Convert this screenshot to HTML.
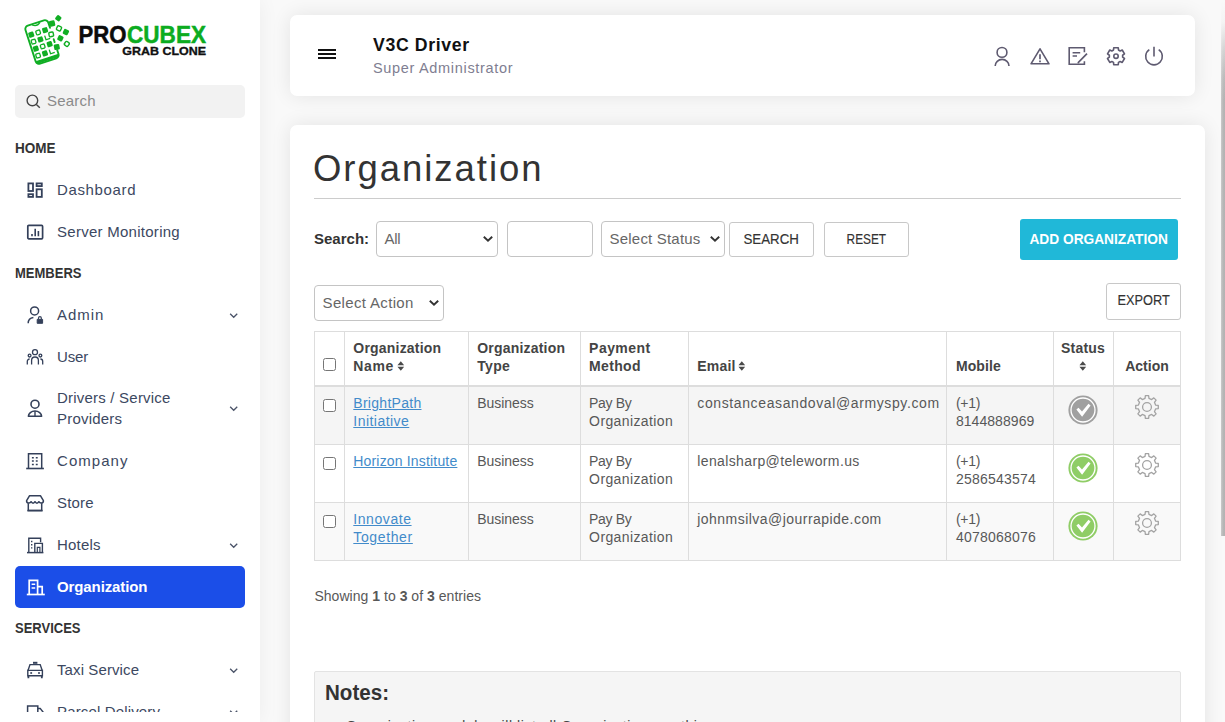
<!DOCTYPE html>
<html lang="en">
<head>
<meta charset="utf-8">
<title>Organization</title>
<style>
*{box-sizing:border-box;margin:0;padding:0}
html,body{width:1225px;height:722px;overflow:hidden}
body{font-family:"Liberation Sans",sans-serif;background:#f9f9f9;color:#333;position:relative;font-size:14px}
.abs{position:absolute}
/* ---------- sidebar ---------- */
#side{position:absolute;left:0;top:0;width:260px;height:722px;background:#fff;box-shadow:0 0 20px rgba(0,0,0,.055);overflow:hidden}
#sbox{position:absolute;left:15px;top:85px;width:230px;height:33px;background:#f2f2f2;border-radius:5px}
#sbox>span{position:absolute;left:32px;top:7.300px;font-size:15px;color:#8a8a8a;letter-spacing:.45px}
.sec{position:absolute;left:15px;font-size:14px;font-weight:bold;color:#333;letter-spacing:-.2px;line-height:16px}
.mi{position:absolute;left:15px;width:230px;height:42px;border-radius:5px;color:#3c4861;font-size:15px}
.mi .ic{position:absolute;left:11px;top:12px;width:18px;height:18px}
.mi .tx{position:absolute;left:42px;top:12px;line-height:18px;white-space:nowrap;letter-spacing:.45px}
.mi .ch{position:absolute;left:214.300px;top:19px;width:9.400px;height:5.600px}
.mi.act{background:#1b4ee8;color:#fff}
.mi.act .tx{font-weight:bold;letter-spacing:-.1px}
svg{display:block;overflow:visible}
/* ---------- header ---------- */
#hdr{position:absolute;left:290px;top:15px;width:905px;height:81px;background:#fff;border-radius:7px;box-shadow:0 0 20px rgba(0,0,0,.09)}
#burger{position:absolute;left:28px;top:34px;width:18.200px;height:10px}
#burger i{display:block;height:1.700px;background:#111;margin-bottom:2.400px}
#hdr h3{position:absolute;left:83px;top:19px;font-size:17.700px;line-height:22px;font-weight:bold;color:#111;letter-spacing:.2px;white-space:nowrap}
#hdr p{position:absolute;left:83px;top:43.800px;font-size:14.500px;line-height:18px;color:#807e91;letter-spacing:.25px;white-space:nowrap}
.hic{position:absolute;top:30px;width:22px;height:22px}
/* ---------- content ---------- */
#card{position:absolute;left:290px;top:125px;width:915px;height:640px;background:#fff;border-radius:7px;box-shadow:0 0 20px rgba(0,0,0,.09)}
#card h1{position:absolute;left:23px;top:21.500px;font-size:36.500px;line-height:44px;font-weight:normal;color:#333;letter-spacing:.9px;white-space:nowrap}
#hr{position:absolute;left:24px;top:73px;width:867px;height:1px;background:#ccc}
.ctl{position:absolute;border:1px solid #c4c4c4;border-radius:4px;background:#fff;color:#666;font-size:15px;white-space:nowrap}
.ctl>span{position:absolute;left:7.300px;top:8px;line-height:17px}
.ctl .dd{position:absolute;right:5px;top:13px;width:9px;height:6px}
.btn{position:absolute;border:1px solid #c8c8c8;border-radius:3px;background:#fff;color:#333;font-size:14px;text-align:center;white-space:nowrap;letter-spacing:.4px}

.lbl{font-size:15px;color:#333;letter-spacing:.1px;line-height:18px}
.btn{-webkit-text-stroke:.15px #333}
.btn.add{-webkit-text-stroke:0;background:#20b8d8;border:0;color:#fff;font-weight:bold;font-size:14px;border-radius:3px}
#tbl{position:absolute;left:23.800px;top:206px;width:867.200px;height:229.800px;border:1px solid #ddd;overflow:hidden}
#tbl .row{position:absolute;left:0;width:867px}
#tbl .vl{position:absolute;top:0;width:1px;height:230px;background:#ddd}
#tbl .hl{position:absolute;left:0;width:867px;height:1px;background:#ddd}
.cb{position:absolute;width:13px;height:13px;border:1px solid #767676;border-radius:2.500px;background:#fff}
.th{position:absolute;font-size:14px;line-height:18px;font-weight:bold;color:#444;white-space:nowrap;letter-spacing:-.15px}
.td{position:absolute;font-size:14px;line-height:18px;color:#585858;white-space:nowrap;letter-spacing:.35px}
.td.lnk{color:#428bca}
.sort{display:inline-block;margin-left:2.500px;vertical-align:0}
#notes{position:absolute;left:24px;top:546px;width:867px;height:120px;background:#f5f5f5;border:1px solid #e3e3e3;border-radius:2px}
#notes h4{position:absolute;left:10px;top:8px;font-size:21.700px;line-height:26px;color:#333;letter-spacing:-.2px}
#notes p{position:absolute;left:31px;top:44.500px;font-size:14px;line-height:18px;color:#444;letter-spacing:.35px;white-space:nowrap}
#notes .bul{position:absolute;left:15px;top:52px;width:5px;height:5px;border-radius:50%;background:#444}
#sb{position:absolute;left:1221px;top:0;width:4px;height:535.500px;background:linear-gradient(to bottom,#f9f9f9 0,rgba(249,249,249,.92) 22px,rgba(249,249,249,.45) 50px,rgba(249,249,249,.1) 78px,rgba(249,249,249,0) 100px),linear-gradient(to right,#cacaca,#b6b6b6 55%,#b3b3b3)}
</style>
</head>
<body>
<div id="side">
  <svg id="logo" class="abs" style="left:20px;top:10px" width="195" height="62" viewBox="0 0 195 62">
    <g transform="translate(22,32) rotate(-18)">
      <path d="M12 -11V-16.500a3.500 3.500 0 0 0 -3.500 -3.500H-8.500a3.500 3.500 0 0 0 -3.500 3.500V16.500a3.500 3.500 0 0 0 3.500 3.500H8.500a3.500 3.500 0 0 0 3.500 -3.500V12.500M12 1V4" fill="none" stroke="#10ae24" stroke-width="1.900" stroke-linecap="round"/>
      <path d="M-10.500 17.800H10.500" stroke="#10ae24" stroke-width="3.200" stroke-linecap="round"/>
      <path d="M-4.200 -19.300q4.200 3.600 8.400 0" fill="none" stroke="#10ae24" stroke-width="1.200"/>
      <rect x="-10.60" y="-13.00" width="5.4" height="5.4" rx="1.2" fill="#10ae24"/><rect x="-2.80" y="-12.40" width="4.2" height="4.2" rx="1" fill="none" stroke="#10ae24" stroke-width="1.3"/><rect x="3.90" y="-13.00" width="5.4" height="5.4" rx="1.2" fill="#10ae24"/><rect x="-10.00" y="-5.05" width="4.2" height="4.2" rx="1" fill="none" stroke="#10ae24" stroke-width="1.3"/><rect x="-3.40" y="-5.65" width="5.4" height="5.4" rx="1.2" fill="#10ae24"/><path d="M4.50 -5.25V-0.85H8.90" fill="none" stroke="#10ae24" stroke-width="1.3"/><rect x="-10.60" y="1.70" width="5.4" height="5.4" rx="1.2" fill="#10ae24"/><rect x="-2.80" y="2.30" width="4.2" height="4.2" rx="1" fill="none" stroke="#10ae24" stroke-width="1.3"/><rect x="3.90" y="1.70" width="5.4" height="5.4" rx="1.2" fill="#10ae24"/><rect x="-10.00" y="9.65" width="4.2" height="4.2" rx="1" fill="none" stroke="#10ae24" stroke-width="1.3"/><rect x="-3.40" y="9.05" width="5.4" height="5.4" rx="1.2" fill="#10ae24"/><path d="M4.50 9.45V13.85H8.90" fill="none" stroke="#10ae24" stroke-width="1.3"/>
    </g>
    <rect x="-2.9" y="-2.9" width="5.8" height="5.8" rx="1.2" fill="#10ae24" transform="translate(32.1,13.5) rotate(-12)"/><rect x="-2.6" y="-2.6" width="5.2" height="5.2" rx="1.2" fill="#10ae24" transform="translate(38.3,8.2) rotate(38)"/><rect x="-2.2" y="-2.2" width="4.4" height="4.4" rx="1" fill="#fff" stroke="#10ae24" stroke-width="1.4" transform="translate(39,18.4) rotate(25)"/><rect x="-2.7" y="-2.7" width="5.4" height="5.4" rx="1.2" fill="#10ae24" transform="translate(45.9,22.1) rotate(25)"/><rect x="-2.2" y="-2.2" width="4.4" height="4.4" rx="1" fill="#fff" stroke="#10ae24" stroke-width="1.4" transform="translate(31.2,24.4) rotate(-12)"/><rect x="-2.7" y="-2.7" width="5.4" height="5.4" rx="1.2" fill="#10ae24" transform="translate(40.4,28.3) rotate(25)"/><rect x="-2.1" y="-2.1" width="4.2" height="4.2" rx="1" fill="#fff" stroke="#10ae24" stroke-width="1.4" transform="translate(46.8,33.9) rotate(38)"/><rect x="-2.8" y="-2.8" width="5.6" height="5.6" rx="1.2" fill="#10ae24" transform="translate(36.8,37) rotate(-12)"/>
    <text x="58.600" y="33" font-family="Liberation Sans, sans-serif" font-weight="bold" font-size="24.500" textLength="48" lengthAdjust="spacingAndGlyphs" fill="#0b0b0b" stroke="#0b0b0b" stroke-width=".5">PRO</text>
    <text x="107" y="33" font-family="Liberation Sans, sans-serif" font-weight="bold" font-size="24.500" textLength="79" lengthAdjust="spacingAndGlyphs" fill="#0cac1f" stroke="#0cac1f" stroke-width=".5">CUBEX</text>
    <text x="102.300" y="45.200" font-family="Liberation Sans, sans-serif" font-weight="bold" font-size="11.600" textLength="83.700" lengthAdjust="spacingAndGlyphs" fill="#111" stroke="#111" stroke-width=".35">GRAB CLONE</text>
  </svg>
  <div id="sbox"><svg class="abs" style="left:11px;top:9px" width="15" height="15" viewBox="0 0 15 15" fill="none" stroke="#444" stroke-width="1.400"><circle cx="6.400" cy="6.400" r="5.300"/><path d="M10.400 10.400l3.400 3.400"/></svg><span><span style="letter-spacing:0.194px">Search</span></span></div>
  <div class="sec" style="top:140px"><span style="display:inline-block;letter-spacing:0;transform:scaleX(0.9667);transform-origin:left center">HOME</span></div>
  <div class="mi" style="top:169px;height:42px"><svg class="ic" viewBox="0 0 18 18" fill="none" stroke="#34405a" stroke-width="1.800"><rect x="2.400" y="2.400" width="4.600" height="7.600"/><rect x="10.600" y="2.400" width="5.200" height="2.700"/><rect x="2.400" y="13.200" width="4.600" height="2.700"/><rect x="10.600" y="8.300" width="5.200" height="7.600"/></svg><span class="tx"><span style="letter-spacing:0.639px">Dashboard</span></span></div>
  <div class="mi" style="top:211px;height:42px"><svg class="ic" viewBox="0 0 18 18" fill="none" stroke="#34405a" stroke-width="1.700"><rect x="1.800" y="2.400" width="14.800" height="13.400" rx="1"/><path d="M6 13.200v-2.200M9.200 13.200V5.800M12.400 13.200V8" stroke-width="1.600"/></svg><span class="tx"><span style="letter-spacing:0.269px">Server Monitoring</span></span></div>
  <div class="sec" style="top:265px"><span style="display:inline-block;letter-spacing:0;transform:scaleX(0.9293);transform-origin:left center">MEMBERS</span></div>
  <div class="mi" style="top:294px;height:42px"><svg class="ic" viewBox="0 0 18 18" fill="none" stroke="#34405a" stroke-width="1.500"><circle cx="8.600" cy="4.900" r="4"/><path d="M2.200 17.300c0-3.400 2.300-5.600 5.200-5.900"/><path d="M11.200 13.400h5.400v3.900h-5.400z" fill="#34405a" stroke-width="1"/><path d="M12.500 13.300v-1.200a1.400 1.400 0 0 1 2.800 0v1.200" stroke-width="1.200"/></svg><span class="tx"><span style="letter-spacing:0.942px">Admin</span></span><svg class="ch" viewBox="0 0 10 6"><path d="M1.2 0.9 L5 4.6 L8.8 0.9" fill="none" stroke="#4a5368" stroke-width="1.4"/></svg></div>
  <div class="mi" style="top:336px;height:42px"><svg class="ic" viewBox="0 0 18 18" fill="none" stroke="#34405a" stroke-width="1.3"><circle cx="9" cy="4.2" r="2.5"/><circle cx="3.6" cy="7.6" r="1.4"/><circle cx="14.4" cy="7.6" r="1.4"/><path d="M5.6 16.6v-4.2a3.4 3.4 0 0 1 6.8 0v4.2"/><path d="M1.3 16.6v-3.3a2.3 2.3 0 0 1 2.3-2.3"/><path d="M16.7 16.6v-3.3a2.3 2.3 0 0 0-2.3-2.3"/></svg><span class="tx"><span style="letter-spacing:-0.157px">User</span></span></div>
  <div class="mi" style="top:377px;height:63px"><svg class="ic" style="top:22px" viewBox="0 0 18 18" fill="none" stroke="#34405a" stroke-width="1.600"><circle cx="9" cy="5.200" r="4"/><path d="M2.400 17.200a6.600 5.200 0 0 1 13.200 0z" stroke-linejoin="round"/><path d="M9 12.200v5" stroke-width="1.400"/></svg><span class="tx" style="top:11.200px;line-height:20.800px;white-space:normal"><span style="letter-spacing:0.211px">Drivers / Service</span><br><span style="letter-spacing:0.205px">Providers</span></span><svg class="ch" style="top:29px" viewBox="0 0 10 6"><path d="M1.2 0.9 L5 4.6 L8.8 0.9" fill="none" stroke="#4a5368" stroke-width="1.4"/></svg></div>
  <div class="mi" style="top:440px;height:42px"><svg class="ic" viewBox="0 0 18 18" fill="none" stroke="#34405a" stroke-width="1.500"><path d="M2.500 16.400V1.700h13.200v14.700"/><path d="M0.200 16.500h17.700" stroke-width="1.600"/><path d="M5.900 5.800h1.900M9.800 5.800h1.900M5.900 9.100h1.900M9.800 9.100h1.900M5.900 12.400h1.900M9.800 12.400h1.900" stroke-width="1.500"/></svg><span class="tx"><span style="letter-spacing:1.049px">Company</span></span></div>
  <div class="mi" style="top:482px;height:42px"><svg class="ic" viewBox="0 0 18 18" fill="none" stroke="#34405a" stroke-width="1.500"><path d="M3.600 1.700h10.800l3 5c.2 2.600-3.300 3.200-4.500 1-1 1.900-2.900 1.900-3.900 0-1 1.900-2.900 1.900-3.900 0-1.200 2.200-4.700 1.600-4.500-1z" stroke-linejoin="round"/><path d="M2.300 9.300v7.200h13.400V9.300"/><path d="M1.400 16.600h15.200" stroke-width="1.600"/></svg><span class="tx"><span style="letter-spacing:0.160px">Store</span></span></div>
  <div class="mi" style="top:524px;height:42px"><svg class="ic" viewBox="0 0 18 18" fill="none" stroke="#34405a" stroke-width="1.4"><path d="M2.800 16.400V2.300h11.800v4"/><path d="M8.800 16.400V7.400h7.600v9"/><path d="M11.300 16.400v-5h2.600v5" stroke-width="1.200"/><path d="M1 16.600h16.400" stroke-width="1.500"/><path d="M5 5.500h1.400M5 8.700h1.400M5 11.900h1.400" stroke-width="1.400"/></svg><span class="tx"><span style="letter-spacing:0.194px">Hotels</span></span><svg class="ch" viewBox="0 0 10 6"><path d="M1.2 0.9 L5 4.6 L8.8 0.9" fill="none" stroke="#4a5368" stroke-width="1.4"/></svg></div>
  <div class="mi act" style="top:566px;height:42px"><svg class="ic" viewBox="0 0 18 18" fill="none" stroke="#fff" stroke-width="1.700"><path d="M3.200 16.400V2.400h8.400v14"/><path d="M11.600 8.600h4.600v7.800"/><path d="M0.800 16.500h18" stroke-width="1.700"/><path d="M5.600 6.300h3.600M5.600 10h3.600" stroke-width="1.500"/></svg><span class="tx"><span style="letter-spacing:-0.107px">Organization</span></span></div>
  <div class="sec" style="top:620px"><span style="display:inline-block;letter-spacing:0;transform:scaleX(0.9285);transform-origin:left center">SERVICES</span></div>
  <div class="mi" style="top:649px;height:42px"><svg class="ic" viewBox="0 0 18 18" fill="none" stroke="#34405a" stroke-width="1.400"><path d="M7 1.800h4.400" stroke-width="2"/><path d="M2 9.400l2-5.800h10.200l2 5.800"/><path d="M1.800 9.400h14.600v5.400H1.800z"/><path d="M2.400 14.800v2.400M15.800 14.800v2.400" stroke-width="1.800"/><path d="M4.200 12h2M5.200 11v2M12 12h2M13 11v2" stroke-width="1"/></svg><span class="tx"><span style="letter-spacing:0.104px">Taxi Service</span></span><svg class="ch" viewBox="0 0 10 6"><path d="M1.2 0.9 L5 4.6 L8.8 0.9" fill="none" stroke="#4a5368" stroke-width="1.4"/></svg></div>
  <div class="mi" style="top:691px;height:42px"><svg class="ic" viewBox="0 0 18 18" fill="none" stroke="#34405a" stroke-width="1.500"><path d="M1.600 14V3h10.200v11"/><path d="M11.800 5.400h2.400l3 3.800V14"/></svg><span class="tx"><span style="letter-spacing:0.152px">Parcel Delivery</span></span><svg class="ch" viewBox="0 0 10 6"><path d="M1.2 0.9 L5 4.6 L8.8 0.9" fill="none" stroke="#4a5368" stroke-width="1.4"/></svg></div>
  <div class="abs" style="left:0;top:712px;width:260px;height:10px;background:#fff"></div>
</div>
<div id="hdr">
  <div id="burger"><i></i><i></i><i></i></div>
  <h3><span style="letter-spacing:0.627px">V3C Driver</span></h3>
  <p><span style="letter-spacing:0.681px">Super Administrator</span></p>
  <svg class="abs" style="left:700px;top:29px" width="24" height="24" viewBox="0 0 24 24" fill="none" stroke="#5e5a70" stroke-width="1.600"><circle cx="12" cy="8.400" r="4.900"/><path d="M5.200 22a6.900 6.600 0 0 1 13.800 0"/></svg>
  <svg class="abs" style="left:738px;top:29px" width="24" height="24" viewBox="0 0 24 24" fill="none" stroke="#5e5a70" stroke-width="1.600" stroke-linejoin="round"><path d="M12 4.800L21 19.800H3z"/><path d="M12 10.300v5" stroke-width="1.700"/><path d="M12 16.600v1.600" stroke-width="1.700"/></svg>
  <svg class="abs" style="left:775px;top:29px" width="24" height="24" viewBox="0 0 24 24" fill="none" stroke="#5e5a70" stroke-width="1.600"><path d="M19.400 8.200V3.800H4.200v16.400h15.200v-3"/><path d="M7.600 8.800h7.600M7.600 12h4.400" stroke-width="1.500"/><path d="M22 9.600l-8.600 8.700-.2 1.100" stroke-width="1.700" stroke-linecap="butt"/></svg>
  <svg class="abs" style="left:814px;top:29px" width="24" height="24" viewBox="0 0 24 24" fill="none" stroke="#5e5a70" stroke-width="1.600" stroke-linejoin="round"><path d="M9.72 3.70L14.28 3.70L14.48 5.98L16.15 6.94L18.22 5.98L20.50 9.92L18.63 11.24L18.63 13.16L20.50 14.48L18.22 18.42L16.15 17.46L14.48 18.42L14.28 20.70L9.72 20.70L9.52 18.42L7.85 17.46L5.78 18.42L3.50 14.48L5.37 13.16L5.37 11.24L3.50 9.92L5.78 5.98L7.85 6.94L9.52 5.98Z"/><circle cx="12" cy="12.200" r="2.200"/></svg>
  <svg class="abs" style="left:852px;top:29px" width="24" height="24" viewBox="0 0 24 24" fill="none" stroke="#5e5a70" stroke-width="1.600"><path d="M12 2.800v9.600"/><path d="M7.300 5.700a8.300 8.300 0 1 0 9.400 0"/></svg>
</div>
<div id="card">
  <h1><span style="letter-spacing:1.968px">Organization</span></h1>
  <div id="hr"></div>
  <b class="abs lbl" style="left:24px;top:105px"><span style="letter-spacing:0.011px">Search:</span></b>
  <div class="ctl" style="left:86.300px;top:96px;width:121.400px;height:35.500px"><span><span style="letter-spacing:-0.386px">All</span></span></div><svg class="abs" style="left:192.8px;top:111.4px" width="10" height="6" viewBox="0 0 10 6"><path d="M0.800 0.700L5 4.700L9.200 0.700" fill="none" stroke="#333" stroke-width="1.900"/></svg>
  <div class="ctl" style="left:217.300px;top:96px;width:86px;height:35.500px"></div>
  <div class="ctl" style="left:311.300px;top:96px;width:124.200px;height:35.500px"><span><span style="letter-spacing:0.192px">Select Status</span></span></div><svg class="abs" style="left:420.3px;top:111.4px" width="10" height="6" viewBox="0 0 10 6"><path d="M0.800 0.700L5 4.700L9.200 0.700" fill="none" stroke="#333" stroke-width="1.900"/></svg>
  <div class="btn" style="left:439.300px;top:97px;width:84.400px;height:34.500px;line-height:32.500px"><span style="display:inline-block;letter-spacing:0;transform:scaleX(0.9493);transform-origin:center center">SEARCH</span></div>
  <div class="btn" style="left:534.300px;top:97px;width:84.400px;height:34.500px;line-height:32.500px"><span style="display:inline-block;letter-spacing:0;transform:scaleX(0.8461);transform-origin:center center">RESET</span></div>
  <div class="btn add" style="left:730.200px;top:94px;width:157.800px;height:41px;line-height:40px"><span style="display:inline-block;letter-spacing:0;transform:scaleX(0.9795);transform-origin:center center">ADD ORGANIZATION</span></div>
  <div class="ctl" style="left:24.300px;top:160px;width:129.400px;height:35.500px"><span><span style="letter-spacing:0.340px">Select Action</span></span></div><svg class="abs" style="left:139px;top:175px" width="10" height="6" viewBox="0 0 10 6"><path d="M0.800 0.700L5 4.700L9.200 0.700" fill="none" stroke="#333" stroke-width="1.900"/></svg>
  <div class="btn" style="left:816.400px;top:158px;width:74.300px;height:36.500px;line-height:33.500px"><span style="display:inline-block;letter-spacing:0;transform:scaleX(0.9125);transform-origin:center center">EXPORT</span></div>
  <div id="tbl">
    <div class="row" style="top:0;height:54px;background:#fff"></div>
    <div class="row" style="top:54px;height:59px;background:#f5f5f5"></div>
    <div class="row" style="top:112px;height:59px;background:#fff"></div>
    <div class="row" style="top:170px;height:59px;background:#f9f9f9"></div>
    <div class="vl" style="left:29px"></div>
    <div class="vl" style="left:153px"></div>
    <div class="vl" style="left:265px"></div>
    <div class="vl" style="left:373px"></div>
    <div class="vl" style="left:631px"></div>
    <div class="vl" style="left:738px"></div>
    <div class="vl" style="left:798px"></div>
    <div class="hl" style="top:52.500px;height:2px;background:#ddd"></div>
    <div class="hl" style="top:112px"></div>
    <div class="hl" style="top:170px"></div>
  </div>
<i class="cb" style="left:33.3px;top:233px"></i>
  <div class="th" style="left:63.300px;top:214.400px"><span style="letter-spacing:0.203px">Organization</span><br><span style="letter-spacing:0.653px">Name</span><svg class="sort" width="7.600" height="10" viewBox="0 0 8 11"><path d="M4 0.200L7.700 4.600H0.300z M4 10.800L0.300 6.400H7.700z" fill="#4a4a4a"/></svg></div>
  <div class="th" style="left:187.200px;top:214.400px"><span style="letter-spacing:0.203px">Organization</span><br><span style="letter-spacing:0.320px">Type</span></div>
  <div class="th" style="left:299.100px;top:214.400px"><span style="letter-spacing:0.457px">Payment</span><br><span style="letter-spacing:0.327px">Method</span></div>
  <div class="th" style="left:407.300px;top:232.400px"><span style="letter-spacing:0.210px">Email</span><svg class="sort" width="7.600" height="10" viewBox="0 0 8 11"><path d="M4 0.200L7.700 4.600H0.300z M4 10.800L0.300 6.400H7.700z" fill="#4a4a4a"/></svg></div>
  <div class="th" style="left:665.900px;top:232.400px"><span style="letter-spacing:0.131px">Mobile</span></div>
  <div class="th" style="left:763px;top:214.400px;width:60px;text-align:center"><span style="letter-spacing:0.221px">Status</span><br><svg class="sort" style="margin-left:0" width="7.600" height="10" viewBox="0 0 8 11"><path d="M4 0.200L7.700 4.600H0.300z M4 10.800L0.300 6.400H7.700z" fill="#4a4a4a"/></svg></div>
  <div class="th" style="left:823px;top:232.400px;width:68px;text-align:center"><span style="letter-spacing:-0.013px">Action</span></div>
  <i class="cb" style="left:33.3px;top:274px"></i>
  <div class="td lnk" style="left:63.300px;top:269.2px"><u><span style="letter-spacing:0.281px">BrightPath</span></u><br><u><span style="letter-spacing:0.460px">Initiative</span></u></div>
  <div class="td" style="left:187.200px;top:269.2px"><span style="letter-spacing:-0.030px">Business</span></div>
  <div class="td" style="left:299.100px;top:269.2px"><span style="letter-spacing:-0.332px">Pay By</span><br><span style="letter-spacing:0.392px">Organization</span></div>
  <div class="td" style="left:407.300px;top:269.2px"><span style="letter-spacing:0.612px">constanceasandoval@armyspy.com</span></div>
  <div class="td" style="left:665.900px;top:269.2px"><span style="letter-spacing:-0.266px">(+1)</span><br><span style="letter-spacing:0.058px">8144888969</span></div>
  <svg class="abs" style="left:778px;top:270px" width="30" height="30" viewBox="0 0 30 30"><circle cx="15" cy="15" r="14.600" fill="#a0a0a0"/><circle cx="15" cy="15" r="12" fill="none" stroke="#fff" stroke-width="1.300"/><path d="M8.400 14.600l2.100-1.900 3.500 3.700 6.500-7.600 2.100 1.700-8.500 11.300z" fill="#fff"/></svg>
  <svg class="abs" style="left:845px;top:270px" width="24" height="24" viewBox="0 0 24 24" fill="none" stroke="#a3a3a3" stroke-width="1.300" stroke-linejoin="round"><path d="M10.39 0.71L13.61 0.71L13.98 3.43L16.66 4.54L18.84 2.88L21.12 5.16L19.46 7.34L20.57 10.02L23.29 10.39L23.29 13.61L20.57 13.98L19.46 16.66L21.12 18.84L18.84 21.12L16.66 19.46L13.98 20.57L13.61 23.29L10.39 23.29L10.02 20.57L7.34 19.46L5.16 21.12L2.88 18.84L4.54 16.66L3.43 13.98L0.71 13.61L0.71 10.39L3.43 10.02L4.54 7.34L2.88 5.16L5.16 2.88L7.34 4.54L10.02 3.43Z"/><circle cx="12" cy="12" r="4.400"/></svg>
  <i class="cb" style="left:33.3px;top:332px"></i>
  <div class="td lnk" style="left:63.300px;top:327.2px"><u><span style="letter-spacing:0.171px">Horizon Institute</span></u></div>
  <div class="td" style="left:187.200px;top:327.2px"><span style="letter-spacing:-0.030px">Business</span></div>
  <div class="td" style="left:299.100px;top:327.2px"><span style="letter-spacing:-0.332px">Pay By</span><br><span style="letter-spacing:0.392px">Organization</span></div>
  <div class="td" style="left:407.300px;top:327.2px"><span style="letter-spacing:0.368px">lenalsharp@teleworm.us</span></div>
  <div class="td" style="left:665.900px;top:327.2px"><span style="letter-spacing:-0.266px">(+1)</span><br><span style="letter-spacing:0.236px">2586543574</span></div>
  <svg class="abs" style="left:778px;top:328px" width="30" height="30" viewBox="0 0 30 30"><circle cx="15" cy="15" r="14.600" fill="#8fcd66"/><circle cx="15" cy="15" r="12" fill="none" stroke="#fff" stroke-width="1.300"/><path d="M8.400 14.600l2.100-1.900 3.500 3.700 6.500-7.600 2.100 1.700-8.500 11.300z" fill="#fff"/></svg>
  <svg class="abs" style="left:845px;top:328px" width="24" height="24" viewBox="0 0 24 24" fill="none" stroke="#a3a3a3" stroke-width="1.300" stroke-linejoin="round"><path d="M10.39 0.71L13.61 0.71L13.98 3.43L16.66 4.54L18.84 2.88L21.12 5.16L19.46 7.34L20.57 10.02L23.29 10.39L23.29 13.61L20.57 13.98L19.46 16.66L21.12 18.84L18.84 21.12L16.66 19.46L13.98 20.57L13.61 23.29L10.39 23.29L10.02 20.57L7.34 19.46L5.16 21.12L2.88 18.84L4.54 16.66L3.43 13.98L0.71 13.61L0.71 10.39L3.43 10.02L4.54 7.34L2.88 5.16L5.16 2.88L7.34 4.54L10.02 3.43Z"/><circle cx="12" cy="12" r="4.400"/></svg>
  <i class="cb" style="left:33.3px;top:390px"></i>
  <div class="td lnk" style="left:63.300px;top:385.2px"><u><span style="letter-spacing:0.569px">Innovate</span></u><br><u><span style="letter-spacing:0.631px">Together</span></u></div>
  <div class="td" style="left:187.200px;top:385.2px"><span style="letter-spacing:-0.030px">Business</span></div>
  <div class="td" style="left:299.100px;top:385.2px"><span style="letter-spacing:-0.332px">Pay By</span><br><span style="letter-spacing:0.392px">Organization</span></div>
  <div class="td" style="left:407.300px;top:385.2px"><span style="letter-spacing:0.460px">johnmsilva@jourrapide.com</span></div>
  <div class="td" style="left:665.900px;top:385.2px"><span style="letter-spacing:-0.266px">(+1)</span><br><span style="letter-spacing:0.236px">4078068076</span></div>
  <svg class="abs" style="left:778px;top:386px" width="30" height="30" viewBox="0 0 30 30"><circle cx="15" cy="15" r="14.600" fill="#8fcd66"/><circle cx="15" cy="15" r="12" fill="none" stroke="#fff" stroke-width="1.300"/><path d="M8.400 14.600l2.100-1.900 3.500 3.700 6.500-7.600 2.100 1.700-8.500 11.300z" fill="#fff"/></svg>
  <svg class="abs" style="left:845px;top:386px" width="24" height="24" viewBox="0 0 24 24" fill="none" stroke="#a3a3a3" stroke-width="1.300" stroke-linejoin="round"><path d="M10.39 0.71L13.61 0.71L13.98 3.43L16.66 4.54L18.84 2.88L21.12 5.16L19.46 7.34L20.57 10.02L23.29 10.39L23.29 13.61L20.57 13.98L19.46 16.66L21.12 18.84L18.84 21.12L16.66 19.46L13.98 20.57L13.61 23.29L10.39 23.29L10.02 20.57L7.34 19.46L5.16 21.12L2.88 18.84L4.54 16.66L3.43 13.98L0.71 13.61L0.71 10.39L3.43 10.02L4.54 7.34L2.88 5.16L5.16 2.88L7.34 4.54L10.02 3.43Z"/><circle cx="12" cy="12" r="4.400"/></svg>
  <div class="td" style="left:24.400px;top:461.800px"><span style="letter-spacing:0.029px">Showing <b>1</b> to <b>3</b> of <b>3</b> entries</span></div>
  <div id="notes"><h4><span style="display:inline-block;letter-spacing:0;transform:scaleX(0.9484);transform-origin:left center">Notes:</span></h4><p><span style="letter-spacing:0.588px">Organization module will list all Organizations on this page.</span></p><i class="bul"></i></div>
</div>
<div id="sb"></div>
</body>
</html>
